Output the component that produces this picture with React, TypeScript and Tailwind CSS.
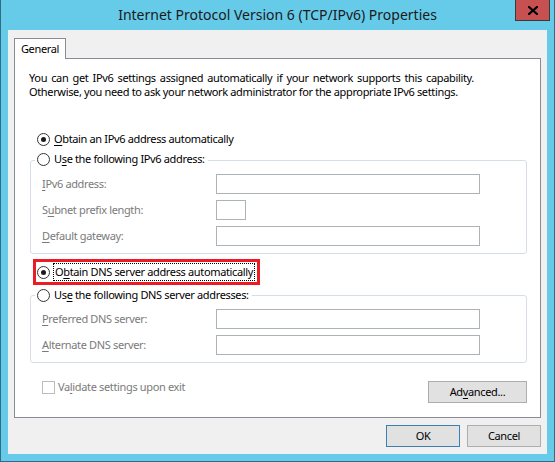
const FONT = "font-['Noto_Sans','Liberation_Sans',sans-serif]"

function Key({ children }: { children: string }) {
  return <span className="underline decoration-1 underline-offset-[2px]">{children}</span>
}

function Radio({ checked = false }: { checked?: boolean }) {
  return (
    <span className="flex size-[13px] shrink-0 items-center justify-center rounded-full border border-[#333333] bg-white">
      {checked && <span className="size-[5px] rounded-full bg-[#1c1c1c]" />}
    </span>
  )
}

function Field({ label, width = 'w-[264px]' }: { label: React.ReactNode; width?: string }) {
  return (
    <div className="flex h-[20px] items-center">
      <span className="w-[174px] text-[#7a7a7a]">{label}</span>
      <span className={`h-[20px] ${width} border border-[#adb2b5] bg-white`} />
    </div>
  )
}

function Legend({ children }: { children: React.ReactNode }) {
  return (
    <div className="relative z-10 ml-[5px] flex h-[16px] w-fit items-center gap-[4px] bg-white pl-[2px] pr-[3px]">
      <Radio />
      <span>{children}</span>
    </div>
  )
}

function Button({ children, primary = false, width = 'w-[74px]' }: { children: React.ReactNode; primary?: boolean; width?: string }) {
  return (
    <button
      className={`flex h-[22px] ${width} items-center justify-center border bg-[#e1e1e1] text-black ${
        primary ? 'border-[#3c7fb1]' : 'border-[#adadad]'
      }`}
    >
      {children}
    </button>
  )
}

export default function App() {
  return (
    <div className={`${FONT} relative flex h-[462px] w-[555px] flex-col border-x border-b border-[#2f6d86] bg-[#66cbe9] text-[11px] leading-[14px] tracking-[-0.35px] text-black`}>
      {/* title bar */}
      <div className="flex h-[30px] shrink-0 items-center justify-center pb-[1px]">
        <span className="text-[14px] tracking-normal text-[#1a1a1a]">Internet Protocol Version 6 (TCP/IPv6) Properties</span>
      </div>
      <button className="absolute right-[4px] top-0 flex h-[21px] w-[35px] items-center justify-center border border-t-0 border-[#3a3a3a] bg-[#c75050]">
        <svg width="10" height="9" viewBox="0 0 10 9">
          <path d="M1 1 L9 8 M9 1 L1 8" stroke="#000" strokeWidth="2.2" strokeLinecap="square" />
        </svg>
      </button>

      {/* client area */}
      <div className="mx-[7px] mb-[7px] flex flex-1 flex-col bg-[#f0f0f0] px-[6px] pb-[7px] pt-[8px]">
        <div className="relative z-10 -mb-px flex h-[21px] w-[52px] items-center justify-center border border-b-0 border-[#898c95] bg-white pb-[1px]">
          General
        </div>
        <div className="flex flex-1 flex-col border border-[#898c95] bg-white pt-[12px]">
          <p className="pl-[14px]">
            <span className="[word-spacing:1.6px]">
              You can get IPv6 settings assigned automatically if your network supports this capability.
            </span>
            <br />
            Otherwise, you need to ask your network administrator for the appropriate IPv6 settings.
          </p>

          <div className="ml-[22px] mt-[32px] flex h-[16px] items-center gap-[4px]">
            <Radio checked />
            <span>
              <Key>O</Key>btain an IPv6 address automatically
            </span>
          </div>

          <div className="ml-[15px] mr-[13px] mt-[4px]">
            <Legend>
              U<Key>s</Key>e the following IPv6 address:
            </Legend>
            <div className="-mt-[7px] flex flex-col gap-[6px] rounded-[3px] border border-[#d5dfe5] pb-[7px] pl-[11px] pt-[13px]">
              <Field label={<><Key>I</Key>Pv6 address:</>} />
              <Field label={<>S<Key>u</Key>bnet prefix length:</>} width="w-[30px]" />
              <Field label={<><Key>D</Key>efault gateway:</>} />
            </div>
          </div>

          <div className="ml-[18px] mt-[5px] flex h-[26px] w-fit items-center gap-[3px] border-[3px] border-[#ed1c24] pl-[1px] pr-[2px]">
            <Radio checked />
            <span className="border border-dotted border-black px-[1px] leading-[16px]">
              O<Key>b</Key>tain DNS server address automatically
            </span>
          </div>

          <div className="ml-[15px] mr-[13px] mt-[2px]">
            <Legend>
              Us<Key>e</Key> the following DNS server addresses:
            </Legend>
            <div className="-mt-[8px] flex flex-col gap-[6px] rounded-[3px] border border-[#d5dfe5] pb-[7px] pl-[11px] pt-[13px]">
              <Field label={<><Key>P</Key>referred DNS server:</>} />
              <Field label={<><Key>A</Key>lternate DNS server:</>} />
            </div>
          </div>

          <div className="ml-[27px] mr-[13px] mt-[17px] flex items-start justify-between">
            <div className="flex h-[14px] items-center gap-[3px] text-[#7a7a7a]">
              <span className="size-[13px] border border-[#bcbcbc] bg-white" />
              <span>
                Va<Key>l</Key>idate settings upon exit
              </span>
            </div>
            <div className="mt-[1px]">
              <Button width="w-[99px]">
                <span>
                  Ad<Key>v</Key>anced...
                </span>
              </Button>
            </div>
          </div>
        </div>

        <div className="mt-[7px] flex justify-end gap-[7px]">
          <Button primary>OK</Button>
          <Button>Cancel</Button>
        </div>
      </div>
    </div>
  )
}
